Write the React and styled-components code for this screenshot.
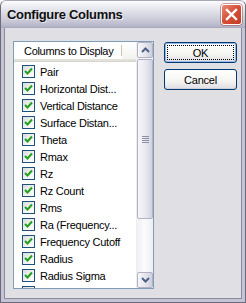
import React from "react";
import styled, { createGlobalStyle } from "styled-components";

const GlobalStyle = createGlobalStyle`
  html, body {
    margin: 0;
    padding: 0;
    background: #ffffff;
  }
  * {
    box-sizing: border-box;
  }
`;

// last entry is only peeking in under the header of the scroll window
const columns = [
  "Pair",
  "Horizontal Dist...",
  "Vertical Distance",
  "Surface Distan...",
  "Theta",
  "Rmax",
  "Rz",
  "Rz Count",
  "Rms",
  "Ra (Frequency...",
  "Frequency Cutoff",
  "Radius",
  "Radius Sigma",
  "",
];

const App = () => {
  return (
    <>
      <GlobalStyle />
      <Window>
        <TitleBar>
          <Title>Configure Columns</Title>
          <CloseButton>
            <svg width="13" height="13" viewBox="0 0 13 13">
              <path
                d="M2 2 L11 11 M11 2 L2 11"
                stroke="#ffffff"
                strokeWidth="2.4"
                strokeLinecap="square"
              />
            </svg>
          </CloseButton>
        </TitleBar>

        <Body>
          <ListBox>
            <ListMain>
              <Header>
                <HeaderCell>Columns to Display</HeaderCell>
                <HeaderRest />
              </Header>
              <Rows>
                {columns.map((name, idx) => (
                  <Row key={idx}>
                    <CheckBox>
                      <svg width="9" height="9" viewBox="0 0 9 9">
                        <path
                          d="M1 4 L3.5 6.5 L8 1.5"
                          fill="none"
                          stroke="#21a121"
                          strokeWidth="2"
                        />
                      </svg>
                    </CheckBox>
                    {name && <Label>{name}</Label>}
                  </Row>
                ))}
              </Rows>
            </ListMain>

            <ScrollBar>
              <ScrollButton>
                <svg width="9" height="6" viewBox="0 0 9 6">
                  <path
                    d="M1 5 L4.5 1.5 L8 5"
                    fill="none"
                    stroke="#4d6185"
                    strokeWidth="2"
                  />
                </svg>
              </ScrollButton>
              <Track>
                <Thumb>
                  <Grip />
                  <Grip />
                  <Grip />
                  <Grip />
                </Thumb>
              </Track>
              <ScrollButton>
                <svg width="9" height="6" viewBox="0 0 9 6">
                  <path
                    d="M1 1 L4.5 4.5 L8 1"
                    fill="none"
                    stroke="#4d6185"
                    strokeWidth="2"
                  />
                </svg>
              </ScrollButton>
            </ScrollBar>
          </ListBox>

          <ButtonColumn>
            <Button $primary>
              <Focus>OK</Focus>
            </Button>
            <Button>Cancel</Button>
          </ButtonColumn>
        </Body>
      </Window>
    </>
  );
};

export default App;

const Window = styled.div`
  width: 246px;
  height: 303px;
  display: flex;
  flex-direction: column;
  background: #c4c4d4;
  border: 1px solid #6a6a7c;
  border-top-color: #a8a8b8;
  border-radius: 6px 6px 0 0;
  overflow: hidden;
  font-family: "Liberation Sans", Arial, sans-serif;
`;

const TitleBar = styled.div`
  height: 27px;
  flex: none;
  display: flex;
  align-items: center;
  justify-content: space-between;
  padding: 0 3px 1px 6px;
  background: linear-gradient(
    to bottom,
    #fefeff 0%,
    #f0f0f5 15%,
    #dcdce6 45%,
    #c6c6d6 75%,
    #b8b8cb 92%,
    #a6a6bc 100%
  );
`;

const Title = styled.div`
  font-size: 13px;
  font-weight: 700;
  letter-spacing: -0.3px;
  color: #101010;
  text-shadow: 1px 1px 0 rgba(255, 255, 255, 0.6);
`;

const CloseButton = styled.div`
  width: 21px;
  height: 21px;
  display: flex;
  align-items: center;
  justify-content: center;
  border: 1px solid #ffffff;
  border-radius: 3px;
  background: linear-gradient(135deg, #e88b78 0%, #d7523a 45%, #c23a22 100%);
  box-shadow: 0 0 0 0.5px #9a4a3a;
  margin-top: 1px;
`;

const Body = styled.div`
  flex: 1;
  display: flex;
  align-items: flex-start;
  margin: 0 3px 3px 3px;
  padding: 13px 4px 0 8px;
  background: #e0dfe3;
  border-left: 1px solid #8c8ca0;
  border-right: 1px solid #8c8ca0;
  border-bottom: 1px solid #8c8ca0;
`;

const ListBox = styled.div`
  width: 143px;
  height: 248px;
  display: flex;
  border: 1px solid #7f9db9;
  background: #ffffff;
  overflow: hidden;
`;

const ListMain = styled.div`
  flex: 1;
  display: flex;
  flex-direction: column;
  min-width: 0;
`;

const Header = styled.div`
  height: 19px;
  flex: none;
  display: flex;
  background: #ffffff;
  border-bottom: 2px solid #e2e1da;
  box-shadow: 0 1px 0 #d6d5cc;
`;

const HeaderCell = styled.div`
  width: 108px;
  display: flex;
  align-items: center;
  padding-left: 10px;
  font-size: 11px;
  letter-spacing: -0.3px;
  color: #000000;
  position: relative;
  &::after {
    content: "";
    position: absolute;
    right: 0;
    top: 3px;
    bottom: 3px;
    width: 1px;
    background: #c7c5b2;
  }
`;

const HeaderRest = styled.div`
  flex: 1;
  background: linear-gradient(to bottom, #ffffff, #f3f3ee);
`;

const Rows = styled.div`
  display: flex;
  flex-direction: column;
  padding-top: 2px;
`;

const Row = styled.div`
  height: 17px;
  flex: none;
  display: flex;
  align-items: center;
  padding-left: 8px;
  gap: 5px;
`;

const CheckBox = styled.div`
  width: 13px;
  height: 13px;
  flex: none;
  display: flex;
  align-items: center;
  justify-content: center;
  border: 1px solid #1c5180;
  background: linear-gradient(135deg, #dcdcd7 0%, #f4f4f2 60%, #ffffff 100%);
`;

const Label = styled.div`
  font-size: 11px;
  letter-spacing: -0.25px;
  color: #000000;
  white-space: nowrap;
`;

const ScrollBar = styled.div`
  width: 17px;
  flex: none;
  display: flex;
  flex-direction: column;
  background: linear-gradient(to right, #eeeef2, #fbfbfc 50%, #eeeef3);
`;

const ScrollButton = styled.div`
  width: 16px;
  height: 16px;
  flex: none;
  margin: 0 0 0 1px;
  display: flex;
  align-items: center;
  justify-content: center;
  border: 1px solid #b2b2c4;
  border-radius: 2px;
  background: linear-gradient(to right, #f7f7fa, #e2e2ea 60%, #cfcfdc);
`;

const Track = styled.div`
  flex: 1;
  display: flex;
  flex-direction: column;
  padding: 1px 0 51px 1px;
`;

const Thumb = styled.div`
  height: 160px;
  display: flex;
  flex-direction: column;
  align-items: center;
  justify-content: center;
  gap: 1px;
  border: 1px solid #b2b2c4;
  border-radius: 2px;
  background: linear-gradient(to right, #f7f7fa, #e6e6ee 60%, #d2d2de);
`;

const Grip = styled.div`
  width: 7px;
  height: 1px;
  background: #8c8ca4;
`;

const ButtonColumn = styled.div`
  display: flex;
  flex-direction: column;
  gap: 6px;
  margin-left: 10px;
  margin-top: 1px;
`;

const Button = styled.div`
  width: 73px;
  height: 21px;
  display: flex;
  align-items: center;
  justify-content: center;
  padding: ${(p) => (p.$primary ? "2px" : "0")};
  border: 1px solid #003c74;
  border-radius: 3px;
  background: linear-gradient(to bottom, #ffffff 0%, #f4f4f0 60%, #dedde4 100%);
  box-shadow: ${(p) =>
    p.$primary ? "inset 0 0 0 1px #9ab6e6" : "inset 0 -1px 0 #cfcfd8"};
  font-size: 11px;
  letter-spacing: -0.2px;
  color: #000000;
`;

const Focus = styled.div`
  width: 100%;
  height: 100%;
  display: flex;
  align-items: center;
  justify-content: center;
  border: 1px dotted #000000;
`;
